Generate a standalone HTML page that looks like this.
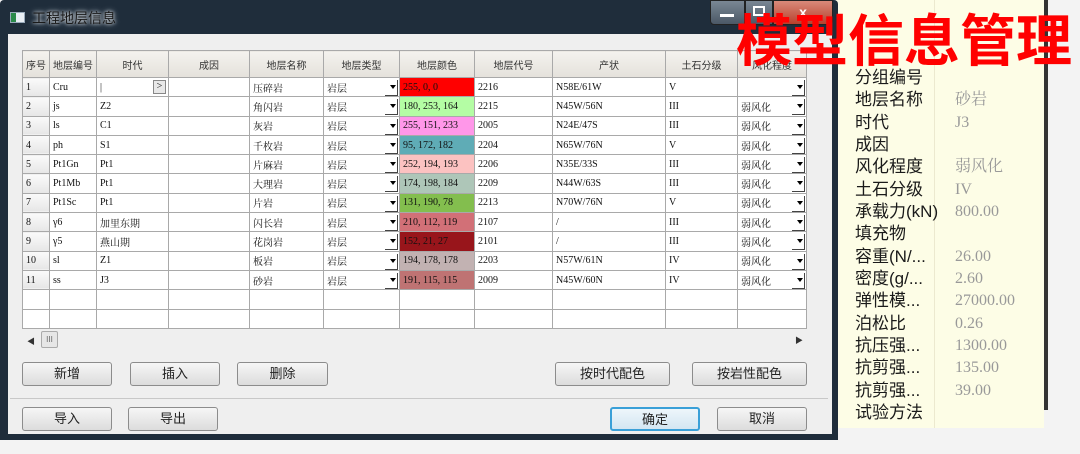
<!DOCTYPE html>
<html><head><meta charset="utf-8">
<style>
*{margin:0;padding:0;box-sizing:border-box}
body{width:1080px;height:454px;overflow:hidden;background:#f3f3f3;position:relative;font-family:"Liberation Sans","Noto Sans CJK SC",sans-serif}
.abs{position:absolute}
#win{left:0;top:0;width:838px;height:440px;background:#1f2d3b;border-radius:4px 4px 0 0}
#title{left:32px;top:8px;font-size:14px;color:#1a1a1a;text-shadow:0 0 6px #cfd6de,0 0 3px #dfe5ea}
#content{left:8px;top:34px;width:824px;height:400px;background:#efefef}
table{position:absolute;left:22px;top:50px;border-collapse:collapse;table-layout:fixed;font-family:"Liberation Serif","Noto Serif CJK SC",serif;font-size:10px;color:#111}
td,th{border:1px solid #a9a9a9;height:19.3px;padding:0 3px;white-space:nowrap;overflow:hidden;background:#fff;text-align:left;font-weight:normal}
th{height:27px;background:linear-gradient(#f4f2ee,#e4e1db);text-align:center;font-family:"Liberation Sans","Noto Sans CJK SC",sans-serif;font-size:10px;color:#333}
td.n{background:linear-gradient(#fafafa,#e6e6e6)}
.dd{position:relative}
.dd:after{content:"";position:absolute;right:3px;top:7px;border-left:3px solid transparent;border-right:3px solid transparent;border-top:4px solid #000}
.dd:before{content:"";position:absolute;right:1px;top:2px;width:12px;height:15px;border-right:1px solid #444;border-bottom:1px solid #444}
.btn{position:absolute;height:24px;border:1px solid #8c8c8c;border-radius:3px;background:linear-gradient(#f6f6f6,#dcdcdc);font-size:13px;color:#222;text-align:center;line-height:22px}
#yel{left:836px;top:0;width:208px;height:428px;background:#fdfde6}
.lab{position:absolute;left:855px;font-size:17px;color:#1a1a1a;line-height:22px}
.val{position:absolute;left:955px;font-size:16px;color:#999;line-height:22px;font-family:"Liberation Serif","Noto Serif CJK SC",serif}
#big{left:736px;top:8px;font-size:56px;font-weight:bold;color:#ff0000;white-space:nowrap;font-family:"Noto Sans CJK SC",sans-serif;line-height:60px}
</style></head><body>
<div id="yel" class="abs"></div>
<div class="abs" style="left:934px;top:0;width:1px;height:428px;background:#ece9cf"></div>
<div class="abs" style="left:1044px;top:0;width:4px;height:410px;background:#333"></div>
<div class="lab" style="top:67px">分组编号</div>
<div class="lab" style="top:89px">地层名称</div><div class="val" style="top:89px">砂岩</div>
<div class="lab" style="top:112px">时代</div><div class="val" style="top:112px">J3</div>
<div class="lab" style="top:134px">成因</div>
<div class="lab" style="top:156px">风化程度</div><div class="val" style="top:156px">弱风化</div>
<div class="lab" style="top:179px">土石分级</div><div class="val" style="top:179px">IV</div>
<div class="lab" style="top:201px">承载力(kN)</div><div class="val" style="top:201px">800.00</div>
<div class="lab" style="top:223px">填充物</div>
<div class="lab" style="top:246px">容重(N/...</div><div class="val" style="top:246px">26.00</div>
<div class="lab" style="top:268px">密度(g/...</div><div class="val" style="top:268px">2.60</div>
<div class="lab" style="top:290px">弹性模...</div><div class="val" style="top:290px">27000.00</div>
<div class="lab" style="top:313px">泊松比</div><div class="val" style="top:313px">0.26</div>
<div class="lab" style="top:335px">抗压强...</div><div class="val" style="top:335px">1300.00</div>
<div class="lab" style="top:357px">抗剪强...</div><div class="val" style="top:357px">135.00</div>
<div class="lab" style="top:380px">抗剪强...</div><div class="val" style="top:380px">39.00</div>
<div class="lab" style="top:402px">试验方法</div>

<div id="win" class="abs"></div>
<div class="abs" style="left:10px;top:12px;width:15px;height:11px;background:linear-gradient(90deg,#2a8a4a 40%,#e8eef4 40%);border:1px solid #9ab"></div>
<div id="title" class="abs">工程地层信息</div>
<div class="abs" style="left:710px;top:0;width:35px;height:25px;background:linear-gradient(#7a8794,#4b5866);border:1px solid #222;border-radius:0 0 0 4px"></div>
<div class="abs" style="left:720px;top:14px;width:14px;height:3px;background:#fff"></div>
<div class="abs" style="left:745px;top:0;width:28px;height:25px;background:linear-gradient(#7a8794,#4b5866);border:1px solid #222"></div>
<div class="abs" style="left:753px;top:6px;width:12px;height:10px;border:2px solid #fff"></div>
<div class="abs" style="left:773px;top:0;width:60px;height:25px;background:linear-gradient(#d98a7a,#b8402c);border:1px solid #222;border-radius:0 0 4px 0;color:#fff;font-size:14px;font-weight:bold;text-align:center;line-height:22px">x</div>
<div id="content" class="abs"></div>

<table>
<colgroup><col style="width:27px"><col style="width:46px"><col style="width:72px"><col style="width:81px"><col style="width:74px"><col style="width:76px"><col style="width:75px"><col style="width:78px"><col style="width:113px"><col style="width:72px"><col style="width:69px"></colgroup>
<tr><th>序号</th><th>地层编号</th><th>时代</th><th>成因</th><th>地层名称</th><th>地层类型</th><th>地层颜色</th><th>地层代号</th><th>产状</th><th>土石分级</th><th>风化程度</th></tr>
<tr><td class="n">1</td><td>Cru</td><td style="position:relative">|<span style="position:absolute;right:2px;top:2px;width:13px;height:14px;border:1px solid #888;background:#e8e8e8;font-size:10px;line-height:12px;text-align:center">&gt;</span></td><td></td><td>压碎岩</td><td class="dd">岩层</td><td style="background:#ff0000">255, 0, 0</td><td>2216</td><td>N58E/61W</td><td>V</td><td class="dd"></td></tr>
<tr><td class="n">2</td><td>js</td><td>Z2</td><td></td><td>角闪岩</td><td class="dd">岩层</td><td style="background:#b4fda4">180, 253, 164</td><td>2215</td><td>N45W/56N</td><td>III</td><td class="dd">弱风化</td></tr>
<tr><td class="n">3</td><td>ls</td><td>C1</td><td></td><td>灰岩</td><td class="dd">岩层</td><td style="background:#ff97e9">255, 151, 233</td><td>2005</td><td>N24E/47S</td><td>III</td><td class="dd">弱风化</td></tr>
<tr><td class="n">4</td><td>ph</td><td>S1</td><td></td><td>千枚岩</td><td class="dd">岩层</td><td style="background:#5facb6">95, 172, 182</td><td>2204</td><td>N65W/76N</td><td>V</td><td class="dd">弱风化</td></tr>
<tr><td class="n">5</td><td>Pt1Gn</td><td>Pt1</td><td></td><td>片麻岩</td><td class="dd">岩层</td><td style="background:#fcc2c1">252, 194, 193</td><td>2206</td><td>N35E/33S</td><td>III</td><td class="dd">弱风化</td></tr>
<tr><td class="n">6</td><td>Pt1Mb</td><td>Pt1</td><td></td><td>大理岩</td><td class="dd">岩层</td><td style="background:#aec6b8">174, 198, 184</td><td>2209</td><td>N44W/63S</td><td>III</td><td class="dd">弱风化</td></tr>
<tr><td class="n">7</td><td>Pt1Sc</td><td>Pt1</td><td></td><td>片岩</td><td class="dd">岩层</td><td style="background:#83be4e">131, 190, 78</td><td>2213</td><td>N70W/76N</td><td>V</td><td class="dd">弱风化</td></tr>
<tr><td class="n">8</td><td>γ6</td><td>加里东期</td><td></td><td>闪长岩</td><td class="dd">岩层</td><td style="background:#d27077">210, 112, 119</td><td>2107</td><td>/</td><td>III</td><td class="dd">弱风化</td></tr>
<tr><td class="n">9</td><td>γ5</td><td>燕山期</td><td></td><td>花岗岩</td><td class="dd">岩层</td><td style="background:#98151b">152, 21, 27</td><td>2101</td><td>/</td><td>III</td><td class="dd">弱风化</td></tr>
<tr><td class="n">10</td><td>sl</td><td>Z1</td><td></td><td>板岩</td><td class="dd">岩层</td><td style="background:#c2b2b2">194, 178, 178</td><td>2203</td><td>N57W/61N</td><td>IV</td><td class="dd">弱风化</td></tr>
<tr><td class="n">11</td><td>ss</td><td>J3</td><td></td><td>砂岩</td><td class="dd">岩层</td><td style="background:#bf7373">191, 115, 115</td><td>2009</td><td>N45W/60N</td><td>IV</td><td class="dd">弱风化</td></tr>
<tr><td></td><td></td><td></td><td></td><td></td><td></td><td></td><td></td><td></td><td></td><td></td></tr>
<tr><td></td><td></td><td></td><td></td><td></td><td></td><td></td><td></td><td></td><td></td><td></td></tr>
</table>
<div class="abs" style="left:27px;top:336px;font-size:8px;color:#333">◀</div>
<div class="abs" style="left:41px;top:331px;width:17px;height:17px;border:1px solid #aaa;border-radius:2px;background:#e6e6e6;font-size:8px;text-align:center;line-height:15px;color:#666">III</div>
<div class="abs" style="left:795px;top:335px;font-size:8px;color:#333">▶</div>

<div class="btn" style="left:22px;top:362px;width:90px">新增</div>
<div class="btn" style="left:130px;top:362px;width:90px">插入</div>
<div class="btn" style="left:237px;top:362px;width:91px">删除</div>
<div class="btn" style="left:555px;top:362px;width:115px">按时代配色</div>
<div class="btn" style="left:692px;top:362px;width:115px">按岩性配色</div>
<div class="abs" style="left:10px;top:398px;width:818px;height:1px;background:#c8c8c8"></div>
<div class="btn" style="left:22px;top:407px;width:90px">导入</div>
<div class="btn" style="left:128px;top:407px;width:90px">导出</div>
<div class="btn" style="left:610px;top:407px;width:90px;border:2px solid #3aa0d8;background:linear-gradient(#eef6fb,#d3e6f2)">确定</div>
<div class="btn" style="left:717px;top:407px;width:90px">取消</div>

<div id="big" class="abs">模型信息管理</div>
</body></html>
